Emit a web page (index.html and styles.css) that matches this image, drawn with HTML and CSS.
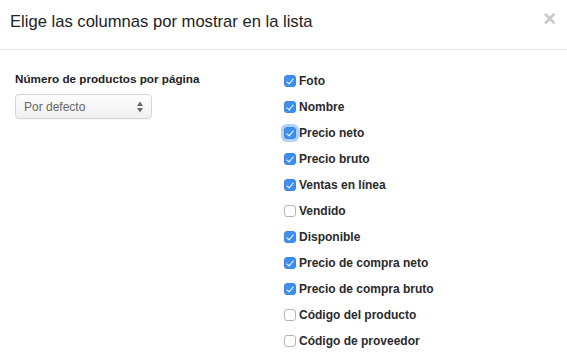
FILE: index.html
```html
<!DOCTYPE html>
<html>
<head>
<meta charset="utf-8">
<link rel="stylesheet" href="styles.css">
</head>
<body>
<div class="modal">
  <div class="modal-header">
    <h4 class="title">Elige las columnas por mostrar en la lista</h4>
    <span class="close">×</span>
  </div>
  <div class="modal-body">
    <div class="left">
      <div class="label">Número de productos por página</div>
      <div class="select">
        <span>Por defecto</span>
        <svg class="arrows" width="6" height="12" viewBox="0 0 6 12"><path d="M3 0.5L6 5H0Z" fill="#6a6a6a"/><path d="M3 11.5L6 7H0Z" fill="#6a6a6a"/></svg>
      </div>
    </div>
    <ul class="checks">
      <li><span class="cb on"></span>Foto</li>
      <li><span class="cb on"></span>Nombre</li>
      <li><span class="cb on focus"></span>Precio neto</li>
      <li><span class="cb on"></span>Precio bruto</li>
      <li><span class="cb on"></span>Ventas en línea</li>
      <li><span class="cb"></span>Vendido</li>
      <li><span class="cb on"></span>Disponible</li>
      <li><span class="cb on"></span>Precio de compra neto</li>
      <li><span class="cb on"></span>Precio de compra bruto</li>
      <li><span class="cb"></span>Código del producto</li>
      <li><span class="cb"></span>Código de proveedor</li>
    </ul>
  </div>
</div>
</body>
</html>
```
FILE: styles.css
```css
* { box-sizing: border-box; }
html, body { margin: 0; padding: 0; background: #fff; }
body { font-family: "Liberation Sans", Arial, sans-serif; color: #333; width: 567px; height: 358px; overflow: hidden; }
.modal { width: 567px; }
.modal-header {
  display: flex; align-items: flex-start; justify-content: space-between;
  height: 50px; padding: 9px 10px 0 10px;
  border-bottom: 1px solid #e5e5e5;
}
.title { margin: 0; font-size: 16.6px; font-weight: normal; line-height: 26px; color: #222; }
.close { font-size: 22px; font-weight: bold; color: #c8c8c8; line-height: 24px; margin-right: 1px; margin-top: -2px; }
.modal-body { display: grid; grid-template-columns: 269px 1fr; padding: 18px 0 0 15px; }
.label { font-size: 11.7px; font-weight: bold; line-height: 16px; margin-top: 3px; color: #222; }
.select {
  margin-top: 7px; width: 137px; height: 25px;
  border: 1px solid #d6d6d6; border-radius: 4px;
  background: linear-gradient(#fdfdfd, #f0f0f0);
  display: flex; align-items: center; justify-content: space-between;
  padding: 0 8px 0 8px; font-size: 12px; color: #666;
  box-shadow: 0 1px 1px rgba(0,0,0,0.04);
}
.arrows { margin-right: 0; }
.checks { list-style: none; margin: 0; padding: 0; }
.checks li {
  display: flex; align-items: center; height: 26px;
  font-size: 12px; font-weight: bold; color: #2a2a2a;
}
.cb {
  width: 12px; height: 12px; border-radius: 3px; margin-right: 3px;
  border: 1px solid #b5b5b5; background: #fff; position: relative; flex: none;
}
.cb.on { background: #3d8ff0; border-color: #3a86e4; }
.cb.on::after {
  content: ""; position: absolute; left: 3px; top: 1px; width: 3px; height: 6px;
  border: solid #fff; border-width: 0 1.6px 1.6px 0; transform: rotate(40deg);
}
.cb.focus { box-shadow: 0 0 0 3px rgba(80,150,240,0.45); }
```
